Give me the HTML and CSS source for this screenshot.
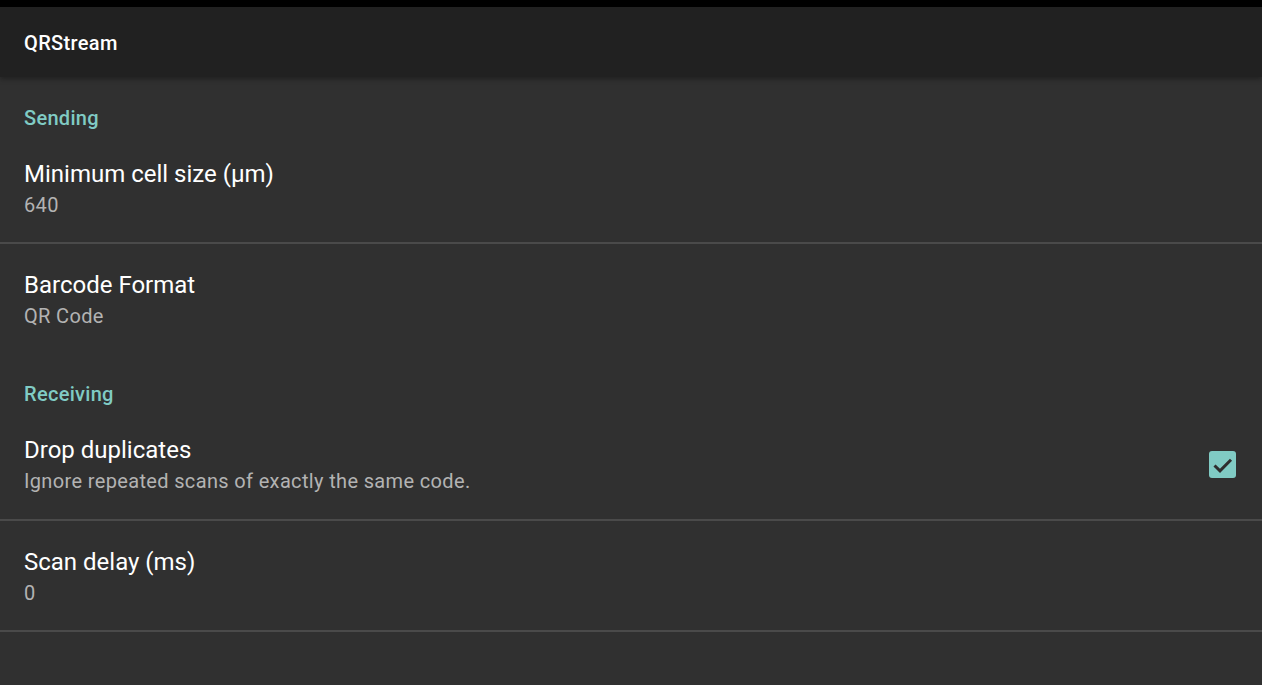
FILE: index.html
```html
<!DOCTYPE html>
<html>
<head>
<meta charset="utf-8">
<link rel="stylesheet" href="styles.css">
</head>
<body>
<div class="statusbar"></div>
<header class="toolbar"><span class="toolbar-title">QRStream</span></header>
<main class="prefs">
  <div class="category">Sending</div>
  <div class="pref">
    <div class="pref-text">
      <div class="pref-title">Minimum cell size (µm)</div>
      <div class="pref-summary">640</div>
    </div>
  </div>
  <div class="divider"></div>
  <div class="pref">
    <div class="pref-text">
      <div class="pref-title">Barcode Format</div>
      <div class="pref-summary">QR Code</div>
    </div>
  </div>
  <div class="category">Receiving</div>
  <div class="pref pref-check">
    <div class="pref-text">
      <div class="pref-title">Drop duplicates</div>
      <div class="pref-summary">Ignore repeated scans of exactly the same code.</div>
    </div>
    <div class="checkbox">
      <svg width="27" height="27" viewBox="0 0 27 27"><path d="M5.5 14.5 L11 19.8 L22 8.8" fill="none" stroke="#2e2e2e" stroke-width="3"/></svg>
    </div>
  </div>
  <div class="divider"></div>
  <div class="pref">
    <div class="pref-text">
      <div class="pref-title">Scan delay (ms)</div>
      <div class="pref-summary">0</div>
    </div>
  </div>
  <div class="divider"></div>
</main>
</body>
</html>
```

FILE: styles.css
```css
html, body {
  margin: 0;
  padding: 0;
  height: 100%;
}
body {
  background: #303030;
  font-family: Roboto, "Noto Sans", sans-serif;
  color: #fff;
  overflow: hidden;
}
.statusbar {
  height: 7px;
  background: #000;
}
.toolbar {
  position: relative;
  z-index: 1;
  height: 70px;
  background: #212121;
  display: flex;
  align-items: center;
  padding-left: 24px;
  box-shadow: 0 2px 5px rgba(0, 0, 0, 0.35);
}
.toolbar-title {
  font-size: 20px;
  font-weight: 500;
  letter-spacing: 0.35px;
  color: #fff;
  padding-top: 2px;
}
.prefs {
  display: flex;
  flex-direction: column;
}
.category {
  box-sizing: border-box;
  height: 56px;
  padding: 29px 24px 0;
  font-size: 20px;
  line-height: 24px;
  font-weight: 500;
  letter-spacing: 0.3px;
  color: #80cbc4;
}
.pref {
  box-sizing: border-box;
  height: 109px;
  padding: 25px 24px 0;
  display: flex;
  align-items: flex-start;
}
.pref-check {
  height: 110px;
  align-items: center;
  padding-top: 2px;
  padding-right: 26px;
}
.pref-text {
  flex: 1;
}
.pref-title {
  font-size: 24px;
  line-height: 32px;
  color: #fff;
}
.pref-summary {
  font-size: 20px;
  line-height: 30px;
  letter-spacing: 0.35px;
  color: #b3b3b3;
}
.checkbox {
  width: 27px;
  height: 27px;
  border-radius: 3px;
  background: #80cbc4;
  display: flex;
  margin-top: -2px;
}
.divider {
  height: 2px;
  background: #4a4a4a;
}
```
